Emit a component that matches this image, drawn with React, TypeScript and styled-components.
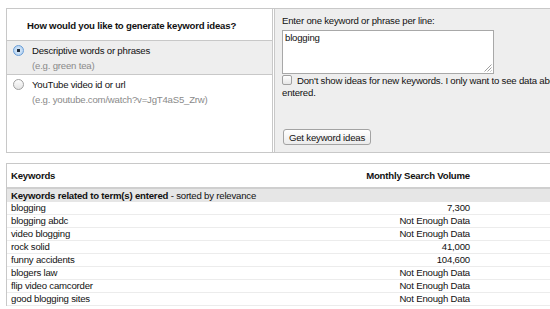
import React from "react";
import styled, { createGlobalStyle } from "styled-components";

const FONT = `"Liberation Sans", Arial, sans-serif`;

const Global = createGlobalStyle`
  html, body { margin: 0; padding: 0; background: #fff; }
  body { font-family: ${FONT}; font-size: 9.6px; letter-spacing: -0.2px; color: #111; overflow: hidden; }
  * { box-sizing: border-box; }
`;

const Page = styled.div`
  width: 550px;
  height: 309px;
  overflow: hidden;
  padding: 8px 0 0 6px;
`;

const Top = styled.div`
  display: flex;
  width: 640px;
  height: 145px;
  border-top: 1px solid #c8c8c8;
  border-bottom: 1px solid #c8c8c8;
`;

const LeftPane = styled.div`
  width: 267px;
  display: flex;
  flex-direction: column;
  border-left: 1px solid #c8c8c8;
  border-right: 1px solid #c8c8c8;
`;

const LeftHead = styled.div`
  height: 32px;
  display: flex;
  align-items: center;
  padding: 1px 0 0 20px;
  font-weight: bold;
  border-bottom: 1px solid #c8c8c8;
`;

const Option = styled.label<{ $selected?: boolean }>`
  display: grid;
  grid-template-columns: 15px 1fr;
  align-content: start;
  column-gap: 5px;
  row-gap: 2px;
  padding: 4px 0 0 5px;
  background: ${(p) => (p.$selected ? "#eeeeee" : "#fff")};
  height: ${(p) => (p.$selected ? "34px" : "auto")};
  flex: ${(p) => (p.$selected ? "none" : "1")};
  border-bottom: ${(p) => (p.$selected ? "1px solid #c8c8c8" : "none")};
`;

const Radio = styled.span<{ $on?: boolean }>`
  width: 11px;
  height: 11px;
  margin-left: 1px;
  border-radius: 50%;
  border: 1px solid ${(p) => (p.$on ? "#6a9ed8" : "#a0a0a0")};
  background: ${(p) =>
    p.$on
      ? "radial-gradient(circle, #1e2a3a 0 1.4px, #cfe3f7 2px, #a9cbee 100%)"
      : "linear-gradient(#fdfdfd, #e4e4e4)"};
`;

const OptLabel = styled.span`
  line-height: 12px;
`;

const Hint = styled.span`
  grid-column: 2;
  color: #8a8a8a;
  line-height: 13px;
`;

const RightPane = styled.div`
  flex: 1;
  background: #eeeeee;
  margin-left: 1px;
  border-left: 1px solid #c8c8c8;
  padding: 5px 0 0 7px;
  display: flex;
  flex-direction: column;
`;

const Prompt = styled.div`
  line-height: 13px;
  margin-bottom: 3px;
`;

const TextArea = styled.div`
  position: relative;
  width: 212px;
  height: 44px;
  background: #fff;
  border: 1px solid #a8a8a8;
  padding: 0 2px;
  line-height: 13px;
`;

const Grip = styled.svg`
  position: absolute;
  right: 1px;
  bottom: 1px;
`;

const CheckRow = styled.div`
  margin-top: 1px;
  line-height: 12px;
  width: 356px;
`;

const CheckBox = styled.span`
  display: inline-block;
  width: 10px;
  height: 10px;
  border: 1px solid #a0a0a0;
  border-radius: 2px;
  background: linear-gradient(#fff, #e6e6e6);
  vertical-align: -1px;
  margin: 0 5px 0 0;
`;

const Button = styled.button`
  margin: 30px 0 0 1px;
  align-self: flex-start;
  height: 16px;
  width: 88px;
  padding: 0;
  font-family: ${FONT};
  font-size: 9.6px;
  letter-spacing: -0.2px;
  border: 1px solid #a3a3a3;
  border-radius: 3px;
  background: linear-gradient(#ffffff, #ebebeb);
  color: #111;
`;

const Table = styled.div`
  margin-top: 10px;
  width: 640px;
  border-top: 1px solid #c8c8c8;
  border-left: 1px solid #c8c8c8;
`;

const Row = styled.div<{ $kind?: "head" | "section" | "data" }>`
  display: grid;
  grid-template-columns: 319px 140px 1fr;
  align-items: center;
  padding-left: 4px;
  height: ${(p) => (p.$kind === "head" ? "25px" : "13px")};
  font-weight: ${(p) => (p.$kind === "head" ? "bold" : "normal")};
  background: ${(p) => (p.$kind === "section" ? "#e6e6e6" : "#fff")};
  border-bottom: ${(p) =>
    p.$kind === "head" ? "2px solid #cfcfcf" : p.$kind === "section" ? "none" : "1px solid #ececec"};
  line-height: 12px;
  white-space: nowrap;
`;

const Num = styled.span`
  text-align: right;
`;

const Bold = styled.b``;

const rows: [string, string][] = [
  ["blogging", "7,300"],
  ["blogging abdc", "Not Enough Data"],
  ["video blogging", "Not Enough Data"],
  ["rock solid", "41,000"],
  ["funny accidents", "104,600"],
  ["blogers law", "Not Enough Data"],
  ["flip video camcorder", "Not Enough Data"],
  ["good blogging sites", "Not Enough Data"],
];

export default function App() {
  return (
    <Page>
      <Global />
      <Top>
        <LeftPane>
          <LeftHead>How would you like to generate keyword ideas?</LeftHead>
          <Option $selected>
            <Radio $on />
            <OptLabel>Descriptive words or phrases</OptLabel>
            <Hint>(e.g. green tea)</Hint>
          </Option>
          <Option>
            <Radio />
            <OptLabel>YouTube video id or url</OptLabel>
            <Hint>(e.g. youtube.com/watch?v=JgT4aS5_Zrw)</Hint>
          </Option>
        </LeftPane>
        <RightPane>
          <Prompt>Enter one keyword or phrase per line:</Prompt>
          <TextArea>
            blogging
            <Grip width="9" height="9" viewBox="0 0 9 9">
              <path d="M8.5 1.5L1.5 8.5M8.5 4.5L4.5 8.5M8.5 7.5L7.5 8.5" stroke="#a0a0a0" strokeWidth="1" />
            </Grip>
          </TextArea>
          <CheckRow>
            <CheckBox />
            Don't show ideas for new keywords. I only want to see data about the keywords I entered.
          </CheckRow>
          <Button>Get keyword ideas</Button>
        </RightPane>
      </Top>
      <Table>
        <Row $kind="head">
          <span>Keywords</span>
          <Num>Monthly Search Volume</Num>
          <span />
        </Row>
        <Row $kind="section">
          <span>
            <Bold>Keywords related to term(s) entered</Bold> - sorted by relevance
          </span>
          <span />
          <span />
        </Row>
        {rows.map(([k, v]) => (
          <Row key={k} $kind="data">
            <span>{k}</span>
            <Num>{v}</Num>
            <span />
          </Row>
        ))}
      </Table>
    </Page>
  );
}
